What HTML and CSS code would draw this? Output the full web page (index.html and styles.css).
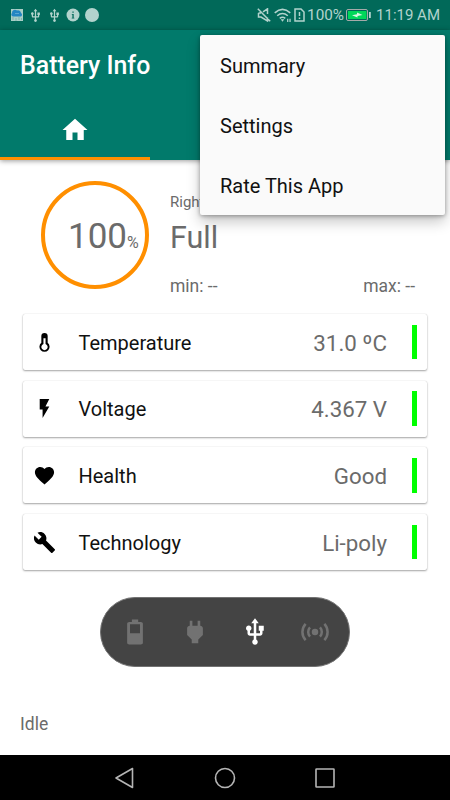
FILE: index.html
```html
<!DOCTYPE html>
<html lang="en">
<head>
<meta charset="utf-8">
<title>Battery Info</title>
<link rel="stylesheet" href="styles.css">
</head>
<body>
<svg class="defs" aria-hidden="true">
  <symbol id="usb" viewBox="0 0 24 24"><path d="M15 7v4h1v2h-3V5h2l-3-4-3 4h2v8H8v-2.070c.7-.37 1.200-1.080 1.200-1.930 0-1.210-.99-2.200-2.200-2.200S4.800 7.790 4.800 9c0 .85.5 1.560 1.200 1.930V13c0 1.110.89 2 2 2h3v3.050c-.71.37-1.200 1.100-1.200 1.950 0 1.220.99 2.200 2.200 2.200s2.200-.98 2.200-2.200c0-.85-.49-1.580-1.200-1.950V15h3c1.110 0 2-.89 2-2v-2h1V7z"/></symbol>
</svg>
<div class="screen">
  <div class="status">
    <div class="notifications">
      <svg class="weather" viewBox="0 0 12 12"><path fill="#a9cec6" d="M0 0h12v12H0z"/><path fill="#2385c2" d="M2 7.500a2 2 0 0 1-1-3.500 3 3 0 0 1 5-2.500 3 3 0 0 1 4 2.500 2 2 0 0 1 0 3.500z"/><path stroke="#7fb3ad" d="M2 8v3M5 9v3M8 8v3M10.500 9v2"/><path stroke="#5aa6d2" d="M4 4.500h4"/></svg>
      <svg class="s-usb"><use href="#usb"/></svg>
      <svg class="s-usb"><use href="#usb"/></svg>
      <svg class="dot" viewBox="0 0 14 14"><circle cx="7" cy="7" r="6.500"/><path class="cut" d="M6.400 3.500h1.300v1.300H6.400zM5.800 6h1.900v3.700h.6v.8H5.700v-.8h.7V6.800h-.6z"/></svg>
      <svg class="dot last" viewBox="0 0 14 14"><circle cx="7" cy="7" r="7"/></svg>
    </div>
    <div class="indicators">
      <svg class="mute" viewBox="0 0 14 14"><path d="M1.500 5H4M1.500 5v4H4l6.500 4V9.500M6 3.800l4.500-3V6M.8.800l12.400 12.400"/></svg>
      <svg class="wifi" viewBox="0 0 16 13"><path d="M.7 4.500q7.300-6.500 14.600 0M3 7.200q5-4.200 10 0M5.400 9.600q2.600-2 5.200 0"/><path class="solid" d="M6.300 10.600h3.400L8 12.800zM12.300 10h1.200v3h-1.200zM14.500 10h1.200v3h-1.200z"/></svg>
      <svg class="sim" viewBox="0 0 11 14"><path d="M1 1h6l3 3v9H1zM5.500 4v4M5.500 9.500V11"/></svg>
      <span class="pct">100%</span>
      <svg class="charge" viewBox="0 0 25 12"><rect x=".5" y=".5" width="21" height="11" rx="1.500" fill="none" stroke="#a5aaa9"/><path fill="#00d75a" d="M2 2h18.500v8H2z"/><path fill="#b2d5cf" d="M23 3h1.800v6H23z"/><path fill="#d9f7e5" d="M6 6.300l5-1V3.500l5.500 2.600-5 .8v1.600z"/></svg>
      <span class="clock">11:19 AM</span>
    </div>
  </div>
  <header class="appbar">
    <h1>Battery Info</h1>
    <nav class="tabs"><div class="tab"><svg viewBox="0 0 24 24"><path d="M10 20v-6h4v6h5v-8h3L12 3 2 12h3v8z"/></svg></div></nav>
  </header>
  <main>
    <section class="summary">
      <div class="ring"><span class="level">100</span><span class="unit">%</span></div>
      <div class="state">
        <div class="when">Right now</div>
        <div class="full">Full</div>
        <div class="range"><span>min: --</span><span>max: --</span></div>
      </div>
    </section>
    <section class="cards">
      <div class="card"><svg viewBox="0 0 24 24"><path fill-rule="evenodd" d="M15.300 12.300V5.300a3.300 3.300 0 0 0-6.600 0v7a5.300 5.300 0 1 0 6.600 0zM10.900 7.500h2.200v6l.8.500a3.300 3.300 0 1 1-3.800 0l.8-.5z"/></svg><span class="name">Temperature</span><span class="value">31.0 ºC</span><i></i></div>
      <div class="card"><svg viewBox="0 0 24 24"><path d="M7 2v11h3v9l7-12h-4l4-8z"/></svg><span class="name">Voltage</span><span class="value">4.367 V</span><i></i></div>
      <div class="card"><svg viewBox="0 0 24 24"><path d="M12 21.350l-1.450-1.320C5.400 15.360 2 12.280 2 8.500 2 5.420 4.420 3 7.500 3c1.740 0 3.410.81 4.500 2.090C13.090 3.810 14.760 3 16.500 3 19.580 3 22 5.420 22 8.500c0 3.780-3.400 6.860-8.550 11.540z"/></svg><span class="name">Health</span><span class="value">Good</span><i></i></div>
      <div class="card"><svg viewBox="0 0 24 24"><path d="M22.700 19l-9.100-9.100c.9-2.300.4-5-1.500-6.900-2-2-5-2.400-7.400-1.300L9 6 6 9 1.600 4.700C.4 7.100.9 10.100 2.900 12.100c1.900 1.900 4.600 2.400 6.900 1.500l9.100 9.100c.4.400 1 .4 1.400 0l2.300-2.300c.5-.4.5-1.100.1-1.400z"/></svg><span class="name">Technology</span><span class="value">Li-poly</span><i></i></div>
    </section>
    <section class="sources">
      <svg viewBox="0 0 24 24"><path d="M15.670 4H14V2h-4v2H8.330C7.600 4 7 4.600 7 5.330v15.340C7 21.400 7.600 22 8.330 22h7.340c.73 0 1.330-.6 1.330-1.330V5.330C17 4.600 16.400 4 15.670 4z" transform="translate(-3.100) scale(1.260 1)"/><path class="hole" d="M8 5.800h8v7.200H8z"/></svg>
      <svg viewBox="0 0 24 24"><path d="M16.010 7L16 3h-2v4h-4V3H8v4h-.010C7 6.990 6 7.990 6 8.990v5.490L9.500 18v3h5v-3l3.500-3.510v-5.500c0-1-1-2-1.990-1.990z" transform="translate(-.6) scale(1.050 1)"/></svg>
      <svg class="active"><use href="#usb"/></svg>
      <svg viewBox="0 0 24 24"><circle cx="12" cy="12" r="2.600"/><path class="wave" d="M8 8.300a5.500 5.500 0 0 0 0 7.400M16 8.300a5.500 5.500 0 0 1 0 7.400M4.500 5.500a9.500 9.500 0 0 0 0 13M19.500 5.500a9.500 9.500 0 0 1 0 13"/></svg>
    </section>
    <p class="idle">Idle</p>
  </main>
  <footer class="navbar">
    <svg viewBox="0 0 24 24"><path d="M3 12L19.500 2.500v19z"/></svg>
    <svg viewBox="0 0 24 24"><circle cx="12" cy="12" r="9.500"/></svg>
    <svg viewBox="0 0 24 24"><rect x="3" y="3" width="18" height="18" rx=".5"/></svg>
  </footer>
  <div class="menu"><div>Summary</div><div>Settings</div><div>Rate This App</div></div>
</div>
</body>
</html>
```
FILE: styles.css
```css
* { box-sizing: border-box; }
body { margin: 0; font-family: Roboto, sans-serif; }
svg { display: block; flex: none; }
.defs { position: absolute; width: 0; height: 0; }
.screen {
  position: relative;
  display: flex;
  flex-direction: column;
  width: 450px;
  height: 800px;
  overflow: hidden;
  background: #fff;
}
.status {
  display: flex;
  justify-content: space-between;
  align-items: center;
  height: 30px;
  padding: 0 10px 0 11px;
  background: #016959;
  color: #b2d3cd;
  fill: #b2d3cd;
}
.notifications, .indicators { display: flex; align-items: center; }
.weather { width: 12px; height: 12px; margin-right: 5px; }
.s-usb { width: 15px; height: 15px; margin-right: 4px; }
.dot { width: 14px; height: 14px; margin-right: 5px; }
.cut { fill: #016959; }
.mute, .wifi, .sim { fill: none; stroke: #b2d3cd; stroke-width: 1.5; }
.solid { fill: #b2d3cd; stroke: none; }
.mute { width: 14px; height: 14px; margin-right: 3px; }
.wifi { width: 17px; height: 14px; margin-right: 3px; }
.sim { width: 11px; height: 14px; margin-right: 2px; }
.pct { width: 37px; font-size: 15.300px; line-height: 30px; margin-right: 2px; white-space: nowrap; }
.charge { width: 25px; height: 12px; margin-right: 5px; }
.clock { font-size: 15px; line-height: 32px; white-space: nowrap; }

.appbar {
  display: flex;
  flex-direction: column;
  height: 130px;
  background: #017a6b;
  box-shadow: 0 1px 5px rgba(0, 0, 0, .4);
}
.appbar h1 {
  margin: 0;
  padding-left: 20px;
  height: 70px;
  font-size: 24.900px;
  line-height: 72px;
  font-weight: 500;
  color: #fff;
}
.tabs { display: flex; height: 60px; }
.tab {
  display: flex;
  justify-content: center;
  align-items: center;
  width: 150px;
  border-bottom: 3px solid #ff8f00;
}
.tab svg { width: 30px; height: 30px; margin-top: 2px; fill: #fff; }

main { flex: 1; display: flex; flex-direction: column; }
.summary { display: flex; height: 154px; padding: 21px 35px 0 41px; color: #6b6b6b; }
.ring {
  display: flex;
  align-items: baseline;
  width: 108px;
  height: 108px;
  padding: 0 0 0 23px;
  border: 4px solid #ff8f00;
  border-radius: 50%;
  line-height: 103px;
}
.level { font-size: 35px; }
.unit { font-size: 16px; }
.state { flex: 1; margin-left: 21px; }
.when { font-size: 15px; line-height: 20px; margin-top: 11px; }
.full { font-size: 30.500px; line-height: 40px; margin-top: 6px; }
.range { display: flex; justify-content: space-between; font-size: 17.500px; line-height: 24px; margin-top: 16px; }

.cards { display: flex; flex-direction: column; gap: 10.700px; padding: 0 23px; }
.card {
  display: flex;
  align-items: center;
  height: 56px;
  padding: 0 10.500px 0 10px;
  border-radius: 2px;
  background: #fff;
  box-shadow: 0 1px 2px rgba(0, 0, 0, .35), 0 0 1px rgba(0, 0, 0, .2);
}
.card svg { width: 23px; height: 23px; }
.name { flex: 1; margin-left: 22.500px; padding-top: 1.500px; font-size: 20px; color: #111; }
.value { font-size: 22.300px; padding-top: 1.500px; color: #6b6b6b; margin-right: 25px; }
.card i { width: 4.500px; height: 34.500px; background: #0f0; }

.sources {
  display: flex;
  justify-content: space-between;
  align-items: center;
  width: 250px;
  height: 70px;
  padding: 0 19px;
  margin: 26.500px auto 0;
  border: 1px solid #727272;
  border-radius: 35px;
  background: #444;
}
.sources svg { width: 30px; height: 30px; fill: #727272; }
.sources .active { fill: #fff; }
.sources .hole { fill: #444; }
.sources .wave { fill: none; stroke: #727272; stroke-width: 2; }
.idle { margin: 45px 0 0 20px; font-size: 17.500px; line-height: 24px; color: #6b6b6b; }

.navbar { display: flex; justify-content: center; align-items: center; gap: 76px; height: 45px; background: #000; }
.navbar svg { width: 24px; height: 24px; fill: none; stroke: #b5b5b5; stroke-width: 1.600; stroke-linejoin: round; }

.menu {
  position: absolute;
  top: 35px;
  left: 200px;
  width: 245px;
  height: 180px;
  padding-left: 20px;
  border-radius: 2px;
  background: #fafafa;
  box-shadow: 0 7px 14px rgba(0, 0, 0, .22), 0 1px 4px rgba(0, 0, 0, .35);
  font-size: 20px;
  line-height: 62px;
  color: #111;
}
.menu div { height: 60px; }
```
